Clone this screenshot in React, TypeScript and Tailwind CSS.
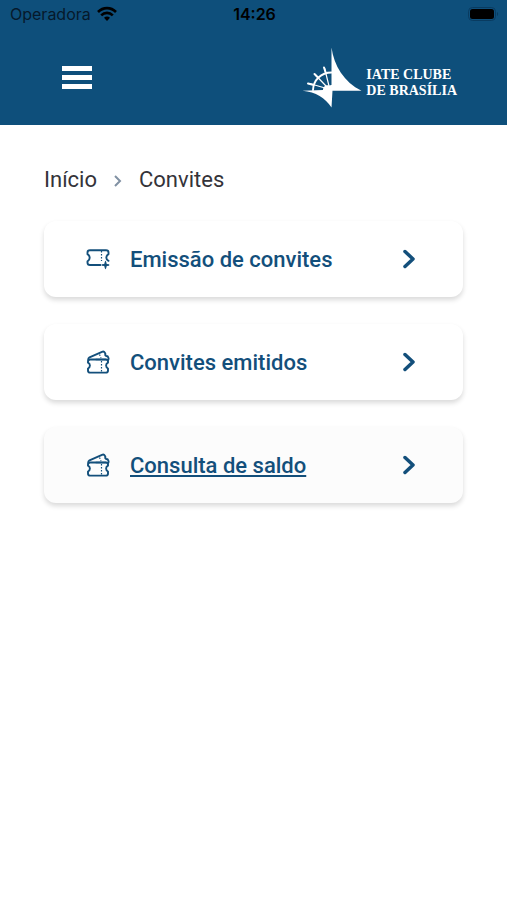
import { ReactNode } from 'react';

interface MenuCardProps {
  label: string;
  icon: ReactNode;
  active?: boolean;
}

const TicketPlusIcon = () => (
  <svg width="24" height="24" viewBox="0 0 24 24" fill="none" stroke="currentColor" strokeWidth="1.9" strokeLinecap="round" strokeLinejoin="round" aria-hidden="true">
    <path d="M14.500 18H4C2.200 18 1.500 17.300 1.500 15.800v-1.500C3 13.500 3.700 12.500 3.700 10.800S3 8 1.500 7.200V5.500C1.500 4 2.200 3.200 4 3.200h16c1.800 0 2.500.8 2.500 2.300v1.700c-1.500.8-2.200 1.900-2.200 3.600 0 1.200.7 2.200 2.200 3" />
    <path d="M15.500 4v10" strokeWidth="1.200" strokeDasharray="1.500 1.500" strokeLinecap="butt" />
    <path d="M19.500 13.500l1.200 3.400 3.100 1.100-3.100 1.100-1.200 3.400-1.200-3.400-3.100-1.100 3.100-1.100z" fill="currentColor" stroke="none" />
    <path d="M19.500 15v6M16.500 18h6" strokeWidth="1.400" />
  </svg>
);

const TicketsIcon = () => (
  <svg width="24" height="24" viewBox="0 0 24 24" fill="none" stroke="currentColor" strokeWidth="1.900" strokeLinecap="round" strokeLinejoin="round" aria-hidden="true">
    <path d="M12.500 9.500H4.200C2.800 9.500 2 10.200 2 11.500v1.200c1.300.6 1.900 1.500 1.900 2.900S3.300 17.900 2 18.500v1.900c0 1.500.8 2.200 2.200 2.200h15.600c1.400 0 2.200-.7 2.200-2.200v-1.900c-1.300-.6-1.900-1.500-1.900-2.900s.6-2.300 1.900-2.900v-1.200c0-1.300-.8-2-2.200-2z" />
    <path d="M2.500 10.200C2 8.800 2.300 8 3.500 7.300L16 1.800c1.400-.6 2.200-.3 2.800.9l.6 1.200c-.5 1.400.5 2.600 2.300 2.400l.7 1.500c.4 1 .1 2-.6 2.700" />
    <path d="M10 9.500h10" strokeWidth="1.600" />
    <path d="M15.500 11v11M13.500 4.500l1.500 3.500" strokeWidth="1.200" strokeDasharray="1.500 1.500" strokeLinecap="butt" />
  </svg>
);

const ClubLogo = () => (
  <svg width="64" height="64" viewBox="0 0 64 64" fill="none" aria-hidden="true">
    <path fill="#fff" d="M30.500 2.500C33 21 43 37 60.500 45.800H31.500L30.500 62.500C24 53 15 47 1.500 45.800L22 45C22 42 24.500 39.500 28 40.500L30.500 40z" />
    <g stroke="#fff" strokeLinecap="round">
      <path strokeWidth="1.900" d="M12 45C12.500 35 20 27.500 30.500 27.500" />
      <path strokeWidth="1.200" d="M24 43 8.500 38.500M25 41 14.500 30M28 41 23.500 23" />
      <path strokeWidth="2" d="m7 38.500 5 1.200M13.500 29l3.500 3.500M23 22.500l1.500 4.500" />
    </g>
  </svg>
);

const StatusBar = () => (
  <div className="grid h-7 grid-cols-3 items-center pl-2.5 pr-2 font-['Inter',sans-serif] text-base text-black">
    <div className="flex items-center gap-1.5">
      <span className="text-[#06192b]">Operadora</span>
      <svg width="20" height="16" viewBox="0 0 20 16" fill="none" stroke="#000" strokeWidth="2.600" aria-label="Wi-Fi">
        <path d="M1 6C6 .8 14 .8 19 6M4.200 9.300c3.300-3.300 8.300-3.300 11.600 0" />
        <path d="M7 11.800c1.700-1.600 4.300-1.600 6 0L10 15z" fill="#000" stroke="none" />
      </svg>
    </div>
    <span className="text-center font-semibold">14:26</span>
    <svg className="justify-self-end" width="31" height="14" viewBox="0 0 31 14" aria-label="Bateria">
      <rect x=".5" y=".5" width="27" height="13" rx="4" fill="none" stroke="#093b60" />
      <rect x="2" y="2" width="24" height="10" rx="2.500" fill="#000" />
      <path d="M29 5c1.500.6 1.500 3.400 0 4z" fill="#093b60" />
    </svg>
  </div>
);

const MenuCard: React.FC<MenuCardProps> = ({ label, icon, active }) => (
  <a
    href="#"
    className={`flex h-19 items-center rounded-xl pl-[42px] pr-12 text-[#134f7b] shadow-[0_3px_5px_rgba(0,0,0,0.15)] ${
      active ? 'bg-[#fcfcfc] underline decoration-2 underline-offset-2' : 'bg-white'
    }`}
  >
    {icon}
    <span className="ml-5 flex-1 text-[22px] font-medium">{label}</span>
    <svg width="13" height="20" viewBox="0 0 13 20" fill="none" stroke="currentColor" strokeWidth="3.500" strokeLinecap="round" strokeLinejoin="round" aria-hidden="true">
      <path d="m3 2.500 8 7.500-8 7.500" />
    </svg>
  </a>
);

const App = () => {
  return (
    <div className="min-h-screen bg-white font-['Roboto',sans-serif]">
      <header className="bg-[#0e4f7b] pb-4">
        <StatusBar />
        <div className="flex items-center justify-between pt-[17px] pl-[62px] pr-12">
          <button type="button" aria-label="Abrir menu" className="flex w-[30px] flex-col gap-1">
            <span className="h-[5px] w-full bg-white" />
            <span className="h-[5px] w-full bg-white" />
            <span className="h-[5px] w-full bg-white" />
          </button>
          <a href="#" className="flex items-center gap-px text-white">
            <ClubLogo />
            <span className="pt-3 pr-0.5 font-['Liberation_Serif',serif] text-sm leading-4 font-bold whitespace-nowrap">
              IATE CLUBE
              <br />
              DE BRASÍLIA
            </span>
          </a>
        </div>
      </header>

      <main className="px-11 pt-9">
        <nav aria-label="Navegação" className="flex h-9 items-center text-[22px] text-[#343339]">
          <a href="#">Início</a>
          <svg className="mx-[17px] mt-1" width="8" height="12" viewBox="0 0 8 12" fill="none" stroke="#8191a3" strokeWidth="2" aria-hidden="true">
            <path d="m1 1 5 5-5 5" />
          </svg>
          <span>Convites</span>
        </nav>
        <div className="mt-6 flex flex-col gap-[27px]">
          <MenuCard label="Emissão de convites" icon={<TicketPlusIcon />} />
          <MenuCard label="Convites emitidos" icon={<TicketsIcon />} />
          <MenuCard label="Consulta de saldo" icon={<TicketsIcon />} active />
        </div>
      </main>
    </div>
  );
};

export default App;
